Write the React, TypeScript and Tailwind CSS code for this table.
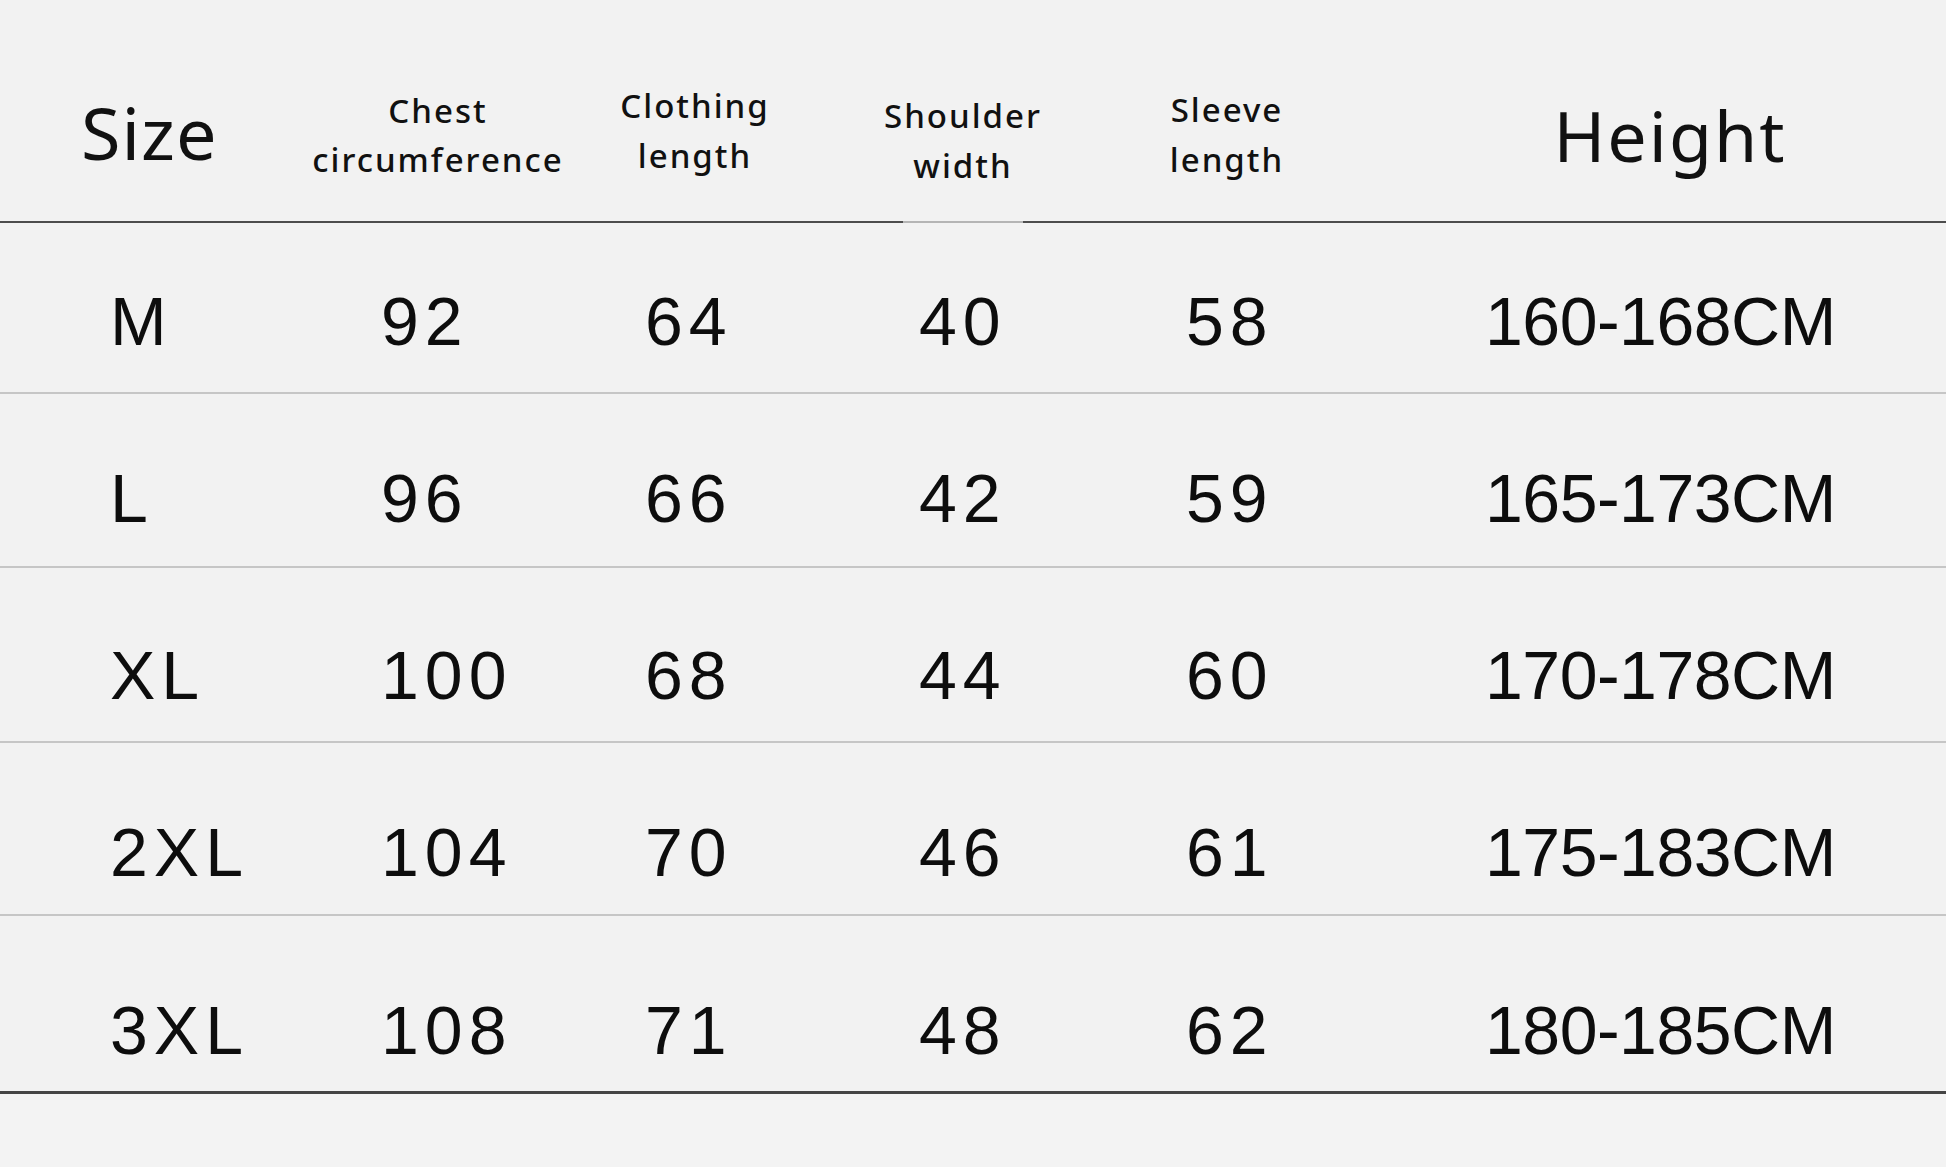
import React from "react";

const rows = [
  { s: "M", c: "92", l: "64", w: "40", sl: "58", h: "160-168CM", pt: "pt-[64px]", hh: "h-[169px]" },
  { s: "L", c: "96", l: "66", w: "42", sl: "59", h: "165-173CM", pt: "pt-[70px]", hh: "h-[172px]" },
  { s: "XL", c: "100", l: "68", w: "44", sl: "60", h: "170-178CM", pt: "pt-[73px]", hh: "h-[173px]" },
  { s: "2XL", c: "104", l: "70", w: "46", sl: "61", h: "175-183CM", pt: "pt-[75px]", hh: "h-[171px]" },
  { s: "3XL", c: "108", l: "71", w: "48", sl: "62", h: "180-185CM", pt: "pt-[80px]", hh: "h-[175px]" },
];

const head = "text-[33px] font-medium leading-[50px] tracking-[2px] text-center text-[#111]";
const data = "text-[68px] leading-none tracking-[6px] text-[#0d0d0d]";

export default function App() {
  return (
    <div className="w-[1946px] h-[1167px] bg-[#f2f2f2] overflow-hidden flex flex-col">
      {/* header */}
      <div
        className="h-[221px] grid grid-cols-[288px_300px_214px_322px_206px_1fr_552px] items-start"
        style={{ fontFamily: '"Noto Sans", "Open Sans", sans-serif' }}
      >
        <div className="pt-[96px] pl-[81px] text-[72px] leading-none tracking-[1px] text-[#111]">Size</div>
        <div className={`pt-[86px] ${head}`}>
          <div>Chest</div>
          <div className="-mt-[1px]">circumference</div>
        </div>
        <div className={`pt-[81px] ${head}`}>
          <div>Clothing</div>
          <div>length</div>
        </div>
        <div className={`pt-[91px] ${head}`}>
          <div>Shoulder</div>
          <div>width</div>
        </div>
        <div className={`pt-[85px] ${head}`}>
          <div>Sleeve</div>
          <div>length</div>
        </div>
        <div />
        <div className="pt-[100px] text-center text-[70px] leading-none tracking-[2px] text-[#111]">Height</div>
      </div>
      <div className="h-[2px] flex">
        <div className="w-[903px] bg-[#4d4d4d]" />
        <div className="w-[120px] bg-[#b5b5b5]" />
        <div className="flex-1 bg-[#4d4d4d]" />
      </div>

      {/* rows */}
      <div style={{ fontFamily: '"Liberation Sans", Arial, sans-serif' }}>
        {rows.map((r, i) => (
          <div key={r.s}>
            <div className={`${r.hh} ${r.pt} grid grid-cols-[381px_264px_274px_267px_299px_1fr]`}>
              <div className={`pl-[110px] ${data}`}>{r.s}</div>
              <div className={data}>{r.c}</div>
              <div className={data}>{r.l}</div>
              <div className={data}>{r.w}</div>
              <div className={data}>{r.sl}</div>
              <div className="text-[68px] leading-none tracking-[-0.5px] text-[#0d0d0d]">{r.h}</div>
            </div>
            {i < rows.length - 1 ? (
              <div className="h-[2px] bg-[#c6c6c6]" />
            ) : (
              <div className="h-[3px] bg-[#444]" />
            )}
          </div>
        ))}
      </div>
      <div className="flex-1 bg-[#f3f3f3]" />
    </div>
  );
}
